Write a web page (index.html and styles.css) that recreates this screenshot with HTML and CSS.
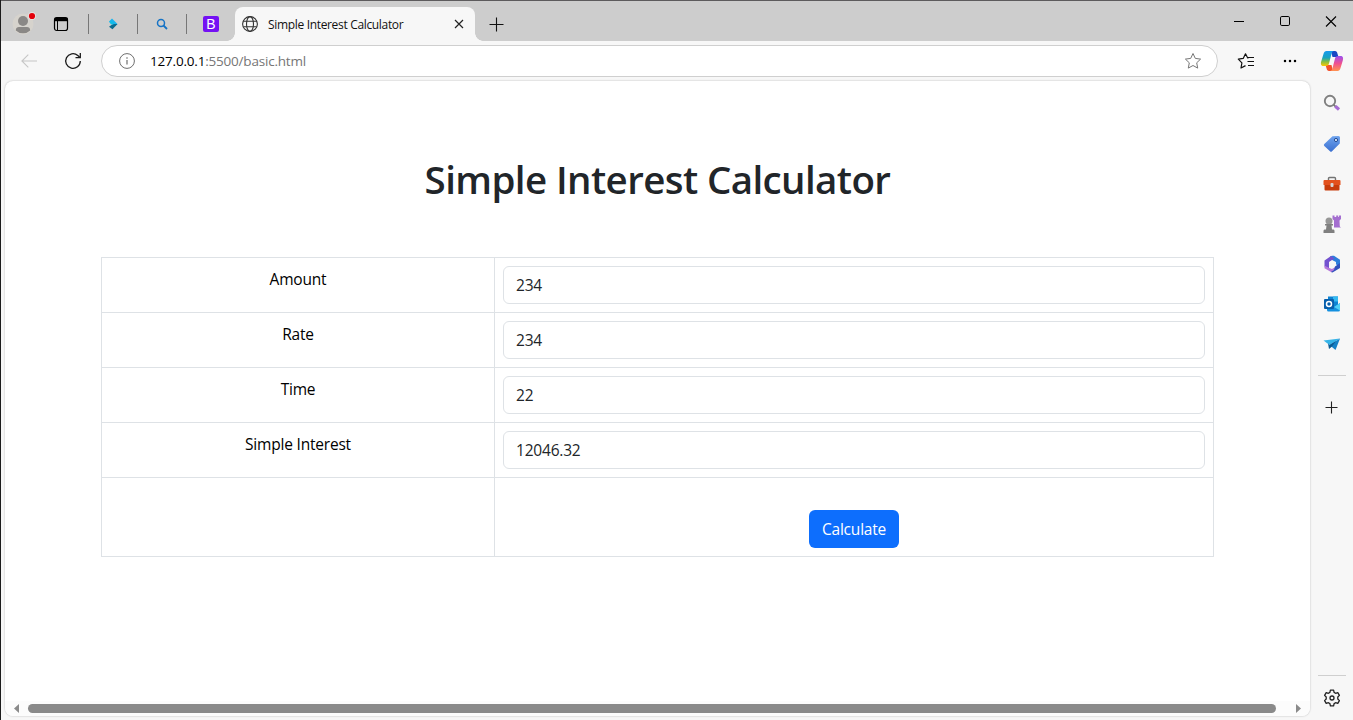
FILE: index.html
```html
<!DOCTYPE html>
<html lang="en">
<head>
<meta charset="utf-8">
<title>Simple Interest Calculator</title>
<link rel="stylesheet" href="styles.css">
</head>
<body>
<div class="window">
  <header class="tabs">
    <div class="slot avatar"><svg width="24" height="26" viewBox="0 0 24 26"><circle cx="11" cy="14" r="10.500" fill="#d6d3cd"/><circle cx="11" cy="11" r="5" fill="#8a8886"/><path d="M3.800 20.500c0-2.600 1.500-3.500 3.200-3.500h8c1.700 0 3.200.9 3.200 3.500a10.500 10.500 0 0 1-14.400 0z" fill="#8a8886"/><circle cx="20" cy="6" r="4" fill="#e6e2e0"/><circle cx="20" cy="6" r="3.100" fill="#e3000b"/></svg></div>
    <div class="slot workspaces"><svg width="16" height="16" viewBox="0 0 16 16" fill="none" stroke="#000"><rect x="1.500" y="1.500" width="13" height="13" rx="2.200" stroke-width="1.200"/><path d="M1.500 3.500h13" stroke-width="3.400"/><path d="M4.500 5v9.500" stroke-width="1"/></svg></div>
    <i class="sep"></i>
    <div class="slot pinned"><svg width="12" height="14" viewBox="0 0 12 14"><path d="M5 1.500 10.500 7 7.500 9.500 2 4.500z" fill="#19b5ee"/><path d="M7 7h3.500L5.500 12.300 2 9.800 4.500 8z" fill="#0b6c8f"/><path d="M2 4.500h3l2 2.500-3 .5z" fill="#10bfe8"/></svg></div>
    <i class="sep"></i>
    <div class="slot pinned"><svg width="12" height="12" viewBox="0 0 12 12" fill="none" stroke="#1673c5"><circle cx="5" cy="5" r="3.500" stroke-width="1.500"/><path d="m7.500 7.500 3.500 3.500" stroke-width="1.800"/></svg></div>
    <i class="sep"></i>
    <div class="slot pinned"><span class="bootstrap">B</span></div>
    <div class="tab">
      <svg class="globe" width="16" height="16" viewBox="0 0 16 16" fill="none" stroke="#333" stroke-width="1.100"><circle cx="8" cy="8" r="7.400"/><ellipse cx="8" cy="8" rx="3.500" ry="7.400"/><path d="M1.300 5.300h13.400M1.300 10.700h13.400"/></svg>
      <span class="tab-title">Simple Interest Calculator</span>
      <svg class="tab-close" width="10" height="10" viewBox="0 0 10 10" stroke="#222" stroke-width="1.200"><path d="m1 1 8 8M9 1 1 9"/></svg>
    </div>
    <div class="slot newtab"><svg width="15" height="15" viewBox="0 0 15 15" stroke="#111" stroke-width="1.100"><path d="M7.500.5v14M.5 7.500h14"/></svg></div>
    <div class="fill"></div>
    <div class="slot control"><svg width="10" height="12" viewBox="0 0 10 12"><path d="M0 5.500h10" stroke="#000"/></svg></div>
    <div class="slot control"><svg width="12" height="12" viewBox="0 0 12 12"><rect x="1.500" y=".5" width="9" height="9" rx="1.300" fill="none" stroke="#000"/></svg></div>
    <div class="slot control last"><svg width="12" height="12" viewBox="0 0 12 12" stroke="#000" stroke-width="1.100"><path d="m1 .5 10 10M11 .5 1 10.500"/></svg></div>
  </header>

  <div class="body">
    <div class="left">
      <nav class="toolbar">
        <div class="slot back"><svg width="16" height="14" viewBox="0 0 16 14" fill="none" stroke="#c6c6c6" stroke-width="1.100"><path d="M16 7H1M7.300.6.9 7l6.400 6.400"/></svg></div>
        <div class="slot reload"><svg width="18" height="18" viewBox="0 0 18 18" fill="none" stroke="#1b1b1b" stroke-width="1.300"><path d="M16.300 9A7.300 7.300 0 1 1 13.800 3.500L16 5.500"/><path d="M16.300 1v4.700h-4.800"/></svg></div>
        <div class="address">
          <div class="slot info"><svg width="16" height="16" viewBox="0 0 16 16" fill="none" stroke="#6e6e6e"><circle cx="8" cy="8" r="7.400"/><path d="M8 7v4.500M8 4.200v1.500" stroke-width="1.200"/></svg></div>
          <span class="url"><b>127.0.0.1</b>:5500/basic.html</span>
          <div class="slot star"><svg width="18" height="18" viewBox="0 0 18 18" fill="none" stroke="#777" stroke-linejoin="round"><path d="m9 1.500 2.300 4.900 5.300.7-3.900 3.700 1 5.300L9 13.500l-4.700 2.600 1-5.300-3.900-3.700 5.300-.7z"/></svg></div>
        </div>
        <div class="slot favorites"><svg width="18" height="18" viewBox="0 0 18 18" fill="none" stroke="#111" stroke-width="1.200" stroke-linejoin="round"><path d="M11.500 6 10.700 6 8.500 1.800 6.200 6.400l-4.900.8L4.900 10.900 4 16l4.500-2.400"/><path d="M11 5.500h6M10.500 9.500H17M11 13.500h6"/></svg></div>
        <div class="slot more"><svg width="14" height="4" viewBox="0 0 14 4"><circle cx="2" cy="2" r="1.250"/><circle cx="7" cy="2" r="1.250"/><circle cx="12" cy="2" r="1.250"/></svg></div>
      </nav>

      <div class="page">
        <main class="content">
          <h1>Simple Interest Calculator</h1>
          <div class="grid">
            <div class="label"><span>Amount</span></div><div class="field"><input value="234"></div>
            <div class="label"><span>Rate</span></div><div class="field"><input value="234"></div>
            <div class="label"><span>Time</span></div><div class="field"><input value="22"></div>
            <div class="label"><span>Simple Interest</span></div><div class="field"><input value="12046.32"></div>
            <div class="label"></div><div class="field action"><button>Calculate</button></div>
          </div>
        </main>
        <div class="scroll">
          <svg width="5" height="9" viewBox="0 0 5 9"><path d="M5 0v9L0 4.500z" fill="#8a8a8a"/></svg>
          <div class="thumb"></div>
          <svg width="5" height="9" viewBox="0 0 5 9"><path d="M0 0v9l5-4.500z" fill="#8a8a8a"/></svg>
        </div>
      </div>
    </div>

    <aside class="side">
      <div class="slot copilot"><svg width="24" height="22" viewBox="0 0 24 22">
        <defs>
          <linearGradient id="ca" x1="0" y1="0" x2="0" y2="1"><stop offset="0" stop-color="#1599ee"/><stop offset=".45" stop-color="#17a3c0"/><stop offset=".7" stop-color="#7fbc48"/><stop offset="1" stop-color="#ffc800"/></linearGradient>
          <linearGradient id="cb" x1="0" y1="0" x2="0" y2="1"><stop offset="0" stop-color="#9b50f0"/><stop offset=".5" stop-color="#f0508f"/><stop offset="1" stop-color="#ff9350"/></linearGradient>
        </defs>
        <path d="M11 1h4c1.500 0 2 1 2.500 2.700L18.500 7H12.500z" fill="#1747c4"/>
        <path d="M13 21H9c-1.500 0-2-1-2.500-2.700L5.500 15H11.500z" fill="#f4512c"/>
        <path d="M6.500 1H14c-1.300 0-2 1-2.400 2.500L9 13.500C8.500 15.300 7.300 16 5.500 16H3.500C1 16 .5 14 1.200 11.500l2.200-7.300C4 2 5 1 6.500 1z" fill="url(#ca)"/>
        <path d="M17.500 21H10c1.300 0 2-1 2.400-2.500l2.600-10C15.500 6.700 16.700 6 18.500 6h2c2.500 0 3 2 2.300 4.500l-2.200 7.300C20 20 19 21 17.500 21z" fill="url(#cb)"/></svg></div>
      <div class="slot"><svg width="18" height="18" viewBox="0 0 18 18" fill="none"><circle cx="7" cy="7" r="5.200" stroke="#808080" stroke-width="1.900"/><path d="m10.800 10.800 2 2" stroke="#777" stroke-width="1.800"/><path d="m12.300 12.300 3.700 3.200" stroke="#a66cd4" stroke-width="3.200"/></svg></div>
      <div class="slot"><svg width="18" height="18" viewBox="0 0 18 18"><defs><linearGradient id="tg" x1="0" y1="0" x2="0" y2="1"><stop offset="0" stop-color="#6fa4ee"/><stop offset="1" stop-color="#3a6fd0"/></linearGradient></defs><path d="M9.500 1.300 15.500 1q1.500 0 1.500 1.500L16.800 8.500 9 16.300q-1 1-2 0L1.300 11q-1-1 0-2z" fill="url(#tg)"/><circle cx="13" cy="5" r="1.600" fill="#dfeaff" stroke="#234b91"/></svg></div>
      <div class="slot"><svg width="18" height="16" viewBox="0 0 18 16"><path d="M5.500 4V2.500q0-1 1-1h5q1 0 1 1V4" fill="none" stroke="#737373" stroke-width="1.400"/><path d="M1.500 4h15q1 0 1 1v4H.5V5q0-1 1-1z" fill="#e3511d"/><path d="M1.500 9h15v4.500q0 1-1 1h-13q-1 0-1-1z" fill="#c73c0c"/><rect x="7.500" y="7" width="3" height="4" rx="1" fill="#d6d6d6"/></svg></div>
      <div class="slot"><svg width="20" height="20" viewBox="0 0 20 20"><path d="M10.500 1.500h2V3h1.700V1.500h2V3H17V1.500h2V5l-1.500 1.500.3 6 1.200 1h-7V6.500L10.500 5z" fill="#a46ed0"/><circle cx="7" cy="7" r="3.500" fill="#979797"/><path d="M3 10h8v1.500H9.500l.5 4h1.500q1 0 1 1.500v2h-11v-2q0-1.500 1-1.500H4l.5-4H3z" fill="#808080"/></svg></div>
      <div class="slot"><svg width="18" height="18" viewBox="0 0 18 18"><path d="M7 1.500 9 .7h2l6 4V11l-4-1.500V7L8 4.500z" fill="#2d7edc"/><path d="m8 1 3.500 2.500L6 7v6.500l-4.500-2v-6z" fill="#7352cf"/><path d="M1.500 10.500 5 12.500l4 1.500 3-1.700V15l-3.500 2.300-7-4z" fill="#b477da"/><path d="M12 11.500 17 8v5l-7.500 4.500L8 17l3-2z" fill="#3151bd"/><path d="m9 5.500 3 1.700v3.600L9 12.500l-3-1.700V7.200z" fill="#f7f7f7"/></svg></div>
      <div class="slot"><svg width="18" height="18" viewBox="0 0 18 18"><path d="M5 1.500h10v12H5z" fill="#0d83d3"/><path d="M10 1.500h5v5h-5z" fill="#35b9f1"/><path d="M4 8l7 4 6-4v7q0 1.500-1.500 1.500H5.500Q4 16.500 4 15z" fill="#1490df"/><path d="m11 12 6-4v7.500z" fill="#50d0f7"/><rect x="1" y="4" width="10" height="10" rx="1" fill="#075fac"/><circle cx="6" cy="9" r="2.500" fill="none" stroke="#fff" stroke-width="1.500"/></svg></div>
      <div class="slot"><svg width="18" height="18" viewBox="0 0 18 18"><path d="M.5 5.500 17 3.500 6.500 10z" fill="#35b4e8"/><path d="m17 3.500-4.500 11.500L6.500 10z" fill="#1681c6"/><path d="M5 8.500 6 14l3-2.500 4-5.500-6.500 4z" fill="#0d5c94"/></svg></div>
      <i class="rule"></i>
      <div class="slot add"><svg width="13" height="13" viewBox="0 0 13 13" stroke="#222" stroke-width="1.100"><path d="M6.500.5v12M.5 6.500h12"/></svg></div>
      <div class="fill"></div>
      <i class="rule"></i>
      <div class="slot gear"><svg width="18" height="18" viewBox="0 0 18 18" fill="none" stroke="#222" stroke-width="1.300" stroke-linejoin="round"><path d="M7.400 1.200h3.200l.5 2.200 1.500.9 2.200-.7 1.600 2.800L14.800 8v2l1.600 1.600-1.600 2.800-2.200-.7-1.500.9-.5 2.200H7.400l-.5-2.200-1.500-.9-2.200.7-1.600-2.800L3.200 10V8L1.600 6.400l1.600-2.800 2.200.7 1.500-.9z"/><circle cx="9" cy="9" r="2"/></svg></div>
    </aside>
  </div>
</div>
</body>
</html>
```
FILE: styles.css
```css
* { box-sizing: border-box; }
body { margin: 0; overflow: hidden; font-family: "Open Sans", "Noto Sans", sans-serif; }
svg { display: block; flex: none; }
.window { width: 1353px; height: 720px; display: flex; flex-direction: column; background: #f7f7f7; border-left: 1px solid #1c1c1c; }
.slot { display: flex; align-items: center; justify-content: center; flex: none; }
.fill { flex: 1; }

/* Tab strip */
.tabs { height: 41px; flex: none; display: flex; align-items: stretch; background: #cdcdcd; border-top: 1px solid #5d5b5d; padding-top: 6px; }
.avatar { width: 45px; padding-bottom: 2px; }
.workspaces { width: 30px; margin-right: 12px; }
.sep { width: 1px; height: 20px; margin-top: 7px; background: #777; flex: none; }
.pinned { width: 48px; }
.bootstrap { width: 16px; height: 16px; border-radius: 2px; background: #7411f3; color: #fff; font: 14px/16px "Liberation Sans", sans-serif; text-align: center; }
.tab { position: relative; width: 240px; background: #f7f7f7; border-radius: 8px 8px 0 0; display: flex; align-items: center; padding: 0 11px 0 7px; }
.tab::before, .tab::after { content: ""; position: absolute; bottom: 0; width: 8px; height: 8px; }
.tab::before { left: -8px; background: radial-gradient(circle at 0 0, transparent 7.5px, #f7f7f7 8px); }
.tab::after { right: -8px; background: radial-gradient(circle at 100% 0, transparent 7.5px, #f7f7f7 8px); }
.tab-title { margin-left: 10px; flex: 1; font-size: 12px; letter-spacing: -0.33px; color: #111; white-space: nowrap; }
.newtab { width: 43px; }
.control { width: 46px; padding-bottom: 5px; }
.last { width: 45px; }

/* Toolbar */
.body { flex: 1; min-height: 0; display: flex; }
.left { width: 1310px; display: flex; flex-direction: column; }
.toolbar { height: 40px; flex: none; display: flex; align-items: center; }
.back { width: 56px; }
.reload { width: 32px; margin-right: 12px; }
.address { width: 1117px; height: 32px; display: flex; align-items: center; background: #fff; border: 1px solid #cfcfcf; border-radius: 16px; }
.info { width: 48px; padding-left: 2px; }
.url { flex: 1; font-size: 13.5px; letter-spacing: -0.2px; color: #767676; }
.url b { font-weight: 400; color: #000; }
.star { width: 48px; }
.favorites { width: 44px; margin-left: 6px; }
.more { width: 42px; padding-left: 2px; }

/* Page */
.page { flex: 1; margin: 0 1px 4px 4px; display: flex; flex-direction: column; background: #fff; border-radius: 8px; overflow: hidden; box-shadow: 0 0 2px rgba(0,0,0,.28); }
.content { flex: 1; padding: 74px 96px 0; }
h1 { margin: 0 0 54px; text-align: center; font-size: 38.5px; line-height: 48px; font-weight: 600; letter-spacing: -0.6px; color: #212529; white-space: nowrap; }
.grid { display: grid; grid-template-columns: 393px 719px; grid-template-rows: repeat(4, 55px) 79px; border-top: 1px solid #dee2e6; border-left: 1px solid #dee2e6; }
.label, .field { border-right: 1px solid #dee2e6; border-bottom: 1px solid #dee2e6; padding: 8px; }
.label { text-align: center; font-size: 15.5px; line-height: 26px; letter-spacing: -0.2px; color: #000; }
input { display: block; width: 100%; height: 38px; border: 1px solid #dee2e6; border-radius: 6px; padding: 0 12px; font: 15.5px "Open Sans", sans-serif; letter-spacing: -0.2px; color: #212529; background: #fff; outline: none; }
.action { display: flex; justify-content: center; align-items: flex-end; }
button { width: 90px; height: 38px; padding: 0; border: 0; border-radius: 6px; background: #0d6efd; color: #fff; font: 15.5px "Open Sans", sans-serif; letter-spacing: -0.2px; }
.scroll { height: 15px; flex: none; display: flex; align-items: center; padding: 0 9px; background: #fcfcfc; }
.thumb { flex: none; width: 1248px; height: 9px; margin: 0 20px 0 9px; border-radius: 5px; background: #8a8a8a; }

/* Sidebar */
.side { width: 42px; display: flex; flex-direction: column; align-items: center; }
.side .slot { height: 40px; width: 42px; }
.side .copilot { height: 41px; padding-bottom: 2px; }
.rule { width: 28px; height: 1px; background: #cfcfcf; flex: none; }
.side .copilot + .slot { height: 42px; }
.side .rule { margin-top: 11px; }
.side .add { height: 63px; padding-right: 1px; }
.side .gear { height: 44px; }
```
